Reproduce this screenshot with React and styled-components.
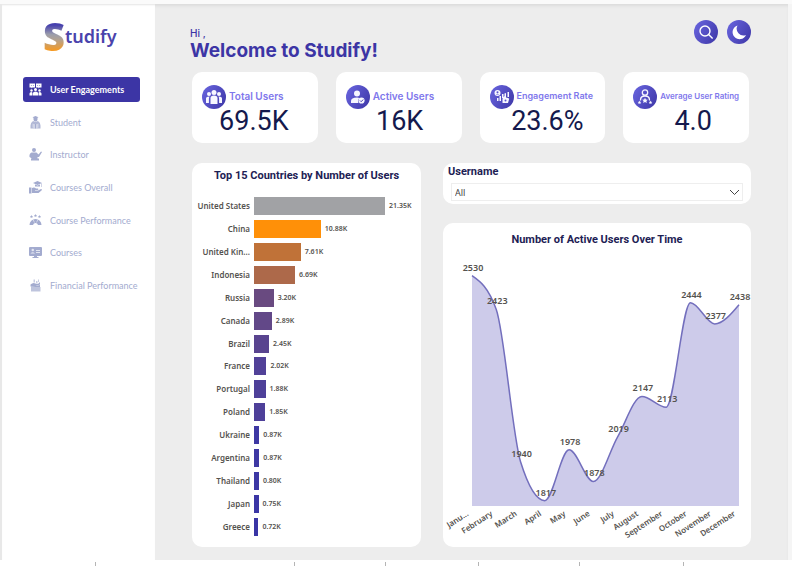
import React from "react";
import styled, { createGlobalStyle } from "styled-components";

const brand = "#3c35a5";
const navy = "#1d2154";
const uiFont = `Inter, "Open Sans", sans-serif`;
const navFont = `Lato, "Open Sans", sans-serif`;
const dinFont = `Roboto, "Liberation Sans", sans-serif`;
const chartFont = `"Noto Sans", "Open Sans", sans-serif`;

const GlobalStyle = createGlobalStyle`
  * { box-sizing: border-box; }
  body { margin: 0; background: #fff; font-family: ${uiFont}; }
`;

const Page = styled.div`
  min-height: 100vh;
  display: flex;
  flex-direction: column;
  border-top: 4px solid #fafafa;
`;

const Canvas = styled.div`
  flex: 1;
  display: grid;
  grid-template-columns: 153px minmax(0, 1fr);
  border-left: 2px solid #e8e8e8;
  border-right: 4px solid #f5f5f5;
  background: #ededed;
  box-shadow: inset 0 3px 3px -1px #dcdcdc;
`;

const Sidebar = styled.aside`
  background: #fff;
  padding: 11px 15px 0 21px;
  box-shadow: inset 0 2px 2px -1px #e4e4e4;
`;

const Logo = styled.a`
  display: flex;
  align-items: center;
  height: 42px;
  margin: 0 0 20px 20px;
  color: #4a43ac;
  font: 600 18px/42px "Noto Sans", sans-serif;
  text-decoration: none;
`;

const LogoInitial = styled.span`
  font: 800 38px/42px "Open Sans", sans-serif;
  color: transparent;
  background: linear-gradient(#4640ae 24%, #9b9dab 46%, #b1a294 58%, #f59a24 84%);
  background-clip: text;
  -webkit-background-clip: text;
`;

const NavList = styled.nav`
  display: flex;
  flex-direction: column;
  justify-content: space-between;
  height: 221px;
`;

const NavItem = styled.a`
  display: flex;
  align-items: center;
  gap: 8px;
  height: 25px;
  padding-left: 6px;
  border-radius: 3px;
  white-space: nowrap;
  text-decoration: none;
  font-family: ${navFont};
  font-size: 9px;
  font-weight: ${(p) => (p.$active ? 700 : 400)};
  color: ${(p) => (p.$active ? "#fff" : "#a3abcf")};
  background: ${(p) => (p.$active ? brand : "transparent")};
  svg { width: 13px; height: 13px; flex: none; }
`;

const Main = styled.main`
  display: flex;
  flex-direction: column;
  padding: 16px 37px 13px 35px;
`;

const Header = styled.header`
  display: flex;
  justify-content: space-between;
  height: 52px;
`;

const Greeting = styled.p`
  margin: 6px 0 0;
  color: ${brand};
  font-size: 10px;
  line-height: 14px;
  font-weight: 500;
`;

const Title = styled.h1`
  margin: 0;
  color: ${brand};
  font-size: 19px;
  line-height: 22px;
  font-weight: 700;
`;

const Actions = styled.div`
  display: flex;
  gap: 9px;
`;

const RoundButton = styled.button`
  width: 24px;
  height: 24px;
  padding: 0;
  border: 0;
  border-radius: 50%;
  background: linear-gradient(120deg, #6a66e0, #3d36a6);
  svg { display: block; width: 24px; height: 24px; }
`;

const Stats = styled.section`
  display: grid;
  grid-template-columns: repeat(4, minmax(0, 1fr));
  gap: 18px;
  padding: 0 2px;
`;

const StatCard = styled.article`
  height: 71px;
  padding: 13px 0 0 10px;
  border-radius: 10px;
  background: #fff;
`;

const StatHead = styled.div`
  display: flex;
  align-items: center;
  gap: 3px;
  height: 24px;
`;

const StatIcon = styled.span`
  flex: none;
  width: 24px;
  height: 24px;
  border-radius: 50%;
  background: linear-gradient(120deg, #6a66e0, #3d36a6);
  svg { display: block; width: 24px; height: 24px; }
`;

const StatLabel = styled.h2`
  margin: 0;
  padding-bottom: 3px;
  white-space: nowrap;
  color: #7f78ec;
  font-size: ${(p) => p.$size}px;
  line-height: 14px;
  font-weight: 600;
`;

const StatValue = styled.p`
  margin: 0;
  padding: 0 12px 0 ${(p) => p.$inset}px;
  text-align: center;
  color: #14194d;
  font: 400 27px/24px ${dinFont};
`;

const Panels = styled.section`
  flex: 1;
  display: grid;
  grid-template-columns: minmax(0, 229fr) minmax(0, 308fr);
  gap: 22px;
  margin-top: 20px;
  padding-left: 2px;
`;

const Panel = styled.section`
  flex: 1;
  display: flex;
  flex-direction: column;
  border-radius: 10px;
  background: #fff;
  padding-top: ${(p) => p.$top}px;
`;

const PanelTitle = styled.h2`
  margin: 0;
  text-align: center;
  color: ${navy};
  font: 700 11px/14px ${dinFont};
`;

const BarRows = styled.ul`
  flex: 1;
  display: grid;
  grid-auto-rows: 1fr;
  margin: 12px 0 9px;
  padding: 0;
  list-style: none;
`;

const BarRow = styled.li`
  display: grid;
  grid-template-columns: 58px minmax(0, 1fr);
  align-items: center;
  column-gap: 4px;
  color: #55534f;
  font-family: ${chartFont};
  font-weight: 600;
`;

const BarLabel = styled.span`
  text-align: right;
  white-space: nowrap;
  font-size: 8px;
  line-height: 12px;
`;

const BarTrack = styled.span`
  display: flex;
  align-items: center;
  gap: 4px;
  padding-right: 36px;
  font-size: 7px;
  line-height: 12px;
`;

const Bar = styled.span`
  flex: none;
  height: 18px;
  background: ${(p) => p.$color};
`;

const RightColumn = styled.div`
  display: flex;
  flex-direction: column;
  gap: 19px;
`;

const Slicer = styled.section`
  height: 41px;
  padding: 2px 8px 0 5px;
  border-radius: 10px;
  background: #fff;
`;

const SlicerLabel = styled.label`
  display: block;
  color: ${navy};
  font: 700 11px/14px ${dinFont};
`;

const SelectWrap = styled.div`
  position: relative;
  margin: 4px 0 0 3px;
  svg { position: absolute; right: 3px; top: 5px; width: 11px; height: 9px; pointer-events: none; }
`;

const Select = styled.select`
  display: block;
  width: 100%;
  height: 18px;
  padding: 2px 3px 0;
  appearance: none;
  border: 1px solid #eee;
  border-radius: 0;
  background: #fff;
  color: #444;
  font: 400 9px/14px ${chartFont};
`;

const AreaSvg = styled.svg`
  display: block;
  width: 100%;
  height: auto;
  overflow: visible;
  font-family: ${chartFont};
  fill: #55534f;
`;

const PointLabel = styled.text`
  font-size: 9px;
  font-weight: 600;
  text-anchor: middle;
`;

const MonthLabel = styled.text`
  font-size: 8px;
  font-weight: 600;
  text-anchor: end;
`;

const TabStrip = styled.footer`
  display: grid;
  grid-template-columns: 96fr 199fr 91fr 93fr 101fr 104fr 108fr;
  height: 6px;
  padding-top: 2px;
`;

const TabEdge = styled.span`
  border-right: 1px solid #b5b5b5;
  &:last-child { border: 0; }
`;

const PeopleChat = () => (
  <svg viewBox="0 0 26 26" fill="currentColor">
    <path d="M1 1h11v8H7l-2 2V9H1zM14 1h11v8h-4l-2 2V9h-5z" />
    <g fill="#3c35a5"><circle cx="4.500" cy="5" r=".9" /><circle cx="8.500" cy="5" r=".9" /><circle cx="17.500" cy="5" r=".9" /><circle cx="21.500" cy="5" r=".9" /></g>
    <circle cx="13" cy="13" r="3" /><circle cx="5" cy="15" r="2.400" /><circle cx="21" cy="15" r="2.400" />
    <path d="M8 25v-5q0-3 5-3t5 3v5zM1 25v-4q0-3 4-3 2 0 2 3v4zM25 25v-4q0-3-4-3-2 0-2 3v4z" />
  </svg>
);
const Student = () => (
  <svg viewBox="0 0 26 26" fill="currentColor">
    <path d="M13 0l6 2.500-2 1v3.500a4 4 0 0 1-8 0V3.500l-2-1z" />
    <path d="M8 10q5 3 10 0 5 3 5 9v6H3v-6q0-6 5-9z" opacity=".85" />
    <path d="M7 15l6 2 6-2v8l-6 2-6-2z" fill="#fff" opacity=".4" /><path d="M12 16h2v9h-2z" />
  </svg>
);
const Instructor = () => (
  <svg viewBox="0 0 26 26" fill="currentColor">
    <circle cx="10" cy="4" r="4" />
    <path d="M5 9h10l4 4 5-6 2 1-6 10h-3v3h3v4H4v-4h2L1 18q-1-7 4-9z" />
  </svg>
);
const HandCap = () => (
  <svg viewBox="0 0 26 26" fill="currentColor">
    <path d="M17 0l9 4-9 4-9-4zM12 7l5 2 5-2v4H12zM24 5h1v7h-1z" />
    <path d="M0 13h5v12H0zM6 14q5-2 8 1h4q2 2-1 3h-5v1h6l6-3q3 0 1 3l-6 5H6z" />
  </svg>
);
const GaugeStars = () => (
  <svg viewBox="0 0 26 26" fill="currentColor">
    <path d="M5 2l1 2 2 .4-1.500 1.400.4 2.200L5 7 3 8l.4-2.200L2 4.400 4 4zM13 0l1 2 2 .4-1.500 1.400.4 2.200L13 5l-2 1 .4-2.200L10 2.400l2-.4zM21 2l1 2 2 .4-1.500 1.400.4 2.200L21 7l-2 1 .4-2.200L18 4.400l2-.4z" />
    <path d="M1 22a12 12 0 0 1 24 0h-7q-1-4-5-4t-5 4z" /><path d="M8 11l3 6M18 11l-3 6" stroke="#fff" />
  </svg>
);
const Monitor = () => (
  <svg viewBox="0 0 26 26" fill="currentColor">
    <path d="M2 2h22q2 0 2 2v14q0 2-2 2h-8v2h3v2H7v-2h3v-2H2q-2 0-2-2V4q0-2 2-2z" />
    <g fill="#fff" opacity=".7"><circle cx="7.500" cy="8" r="2.500" /><path d="M3 15q4-5 9 0zM14 8h8v2h-8zM14 12h8v2h-8z" /></g>
  </svg>
);
const Finance = () => (
  <svg viewBox="0 0 26 26" fill="currentColor">
    <path d="M3 11q5-5 10-2t9-3v5l-9 3-10 1z" />
    <path d="M9 1h3v6H9zM14 4h3v5h-3zM18 1h2v5h-2z" opacity=".6" />
    <path d="M4 16h19v9H4z" opacity=".7" /><path d="M4 15l9-1 9-2v4H4z" />
  </svg>
);

const UsersGlyph = () => (
  <svg viewBox="0 0 24 24" fill="#f7f7ff">
    <circle cx="12" cy="7.500" r="2.500" /><circle cx="7" cy="9" r="2" /><circle cx="17" cy="9" r="2" />
    <path d="M8.500 19v-6q0-2.500 3.500-2.500t3.500 2.500v6zM4 18v-4.500Q4 11.500 7.500 11.500q-.6 1-.6 2.500V18zM20 18v-4.500q0-2-3.500-2 .6 1 .6 2.500V18z" />
  </svg>
);
const UserCheckGlyph = () => (
  <svg viewBox="0 0 24 24" fill="#f7f7ff">
    <circle cx="11" cy="8.500" r="3" /><path d="M5 18v-2q0-3.500 6-3.500 1.500 0 2.500.5-2.500 2-1 5z" />
    <circle cx="15.500" cy="15.500" r="3.100" /><path d="M14 15.500l1.200 1.200 2-2.200" fill="none" stroke="#4740b0" />
  </svg>
);
const RateGlyph = () => (
  <svg viewBox="0 0 24 24" fill="#f7f7ff">
    <circle cx="7.500" cy="8" r="3" /><circle cx="7.500" cy="7.300" r="1" fill="#5a55cc" /><path d="M5.700 9.600q1.800-1.800 3.600 0z" fill="#5a55cc" />
    <path d="M7 13h1.500v3H7zM9.500 11H11v5H9.500zM12 9h1.500v4H12zM14.500 11V8.500q1-1 1.500 0v4L18 13q1.500 0 1 1.500L18 18h-5.500v-4.500zM17.500 7H19v5h-1.500z" />
    <circle cx="15.500" cy="15.500" r="1" fill="#5a55cc" />
  </svg>
);
const RatingGlyph = () => (
  <svg viewBox="0 0 24 24" fill="#f7f7ff">
    <circle cx="12" cy="7.500" r="2.700" fill="none" stroke="#f7f7ff" strokeWidth="1.300" />
    <path d="M7.500 15.500V15q0-4 4.500-4t4.500 4v.5" fill="none" stroke="#f7f7ff" strokeWidth="1.300" />
    <path d="M12 12.800l.9 1.700 1.900.3-1.400 1.300.4 1.900-1.800-.9-1.800.9.4-1.900-1.400-1.300 1.900-.3z" />
    <path d="M6.500 15.700l.6 1.100 1.200.2-.9.800.2 1.200-1.100-.6-1.100.6.2-1.200-.9-.8 1.200-.2zM17.500 15.700l.6 1.100 1.200.2-.9.800.2 1.200-1.100-.6-1.100.6.2-1.200-.9-.8 1.200-.2z" />
  </svg>
);

const navItems = [
  ["User Engagements", PeopleChat],
  ["Student", Student],
  ["Instructor", Instructor],
  ["Courses Overall", HandCap],
  ["Course Performance", GaugeStars],
  ["Courses", Monitor],
  ["Financial Performance", Finance],
];

const stats = [
  { label: "Total Users", value: "69.5K", size: 10, inset: 0, Icon: UsersGlyph },
  { label: "Active Users", value: "16K", size: 10, inset: 4, Icon: UserCheckGlyph },
  { label: "Engagement Rate", value: "23.6%", size: 9, inset: 12, Icon: RateGlyph },
  { label: "Average User Rating", value: "4.0", size: 8, inset: 16, Icon: RatingGlyph },
];

const countries = [
  ["United States", "21.35", "#a1a2a5"],
  ["China", "10.88", "#ff9008"],
  ["United Kin...", "7.61", "#c07238"],
  ["Indonesia", "6.69", "#ad694a"],
  ["Russia", "3.20", "#694a80"],
  ["Canada", "2.89", "#624888"],
  ["Brazil", "2.45", "#59448f"],
  ["France", "2.02", "#514198"],
  ["Portugal", "1.88", "#4e4099"],
  ["Poland", "1.85", "#4e4099"],
  ["Ukraine", "0.87", "#3e38a3"],
  ["Argentina", "0.87", "#3e38a3"],
  ["Thailand", "0.80", "#3c37a4"],
  ["Japan", "0.75", "#3b36a5"],
  ["Greece", "0.72", "#3a35a5"],
];

const months = [
  ["Janu...", 2530], ["February", 2423], ["March", 1940], ["April", 1817],
  ["May", 1978], ["June", 1878], ["July", 2019], ["August", 2147],
  ["September", 2113], ["October", 2444], ["November", 2377], ["December", 2438],
];

const baseY = 259;
const stepX = 267 / 11;
const points = months.map(([, v], i) => [29 + i * stepX, baseY - (v - 1800) * 0.3156]);

/* Monotone cubic interpolation through the monthly points. */
function monotonePath(pts) {
  const slopes = pts.slice(1).map((p, i) => (p[1] - pts[i][1]) / (p[0] - pts[i][0]));
  const tangents = pts.map((_, i) => {
    if (i === 0 || i === pts.length - 1) return null;
    const a = slopes[i - 1];
    const b = slopes[i];
    if (a * b <= 0) return 0;
    return Math.sign(a) * 2 * Math.min(Math.abs(a), Math.abs(b), Math.abs(a + b) / 4);
  });
  tangents[0] = (3 * slopes[0] - tangents[1]) / 2;
  const last = pts.length - 1;
  tangents[last] = (3 * slopes[last - 1] - tangents[last - 1]) / 2;
  return pts.slice(1).reduce((d, p, i) => {
    const [x0, y0] = pts[i];
    const h = (p[0] - x0) / 3;
    return `${d}C${x0 + h},${y0 + h * tangents[i]},${p[0] - h},${p[1] - h * tangents[i + 1]},${p[0]},${p[1]}`;
  }, `M${pts[0][0]},${pts[0][1]}`);
}

const line = monotonePath(points);

function AreaChart() {
  return (
    <AreaSvg viewBox="0 0 308 300" role="img" aria-label="Number of active users by month">
      <path d={`${line}V${baseY}H29Z`} fill="#cdcbea" />
      <path d={line} fill="none" stroke="#736fbd" strokeWidth="1.500" />
      {months.map(([name, value], i) => (
        <g key={name}>
          <PointLabel x={points[i][0] + 1} y={points[i][1] - 5}>{value}</PointLabel>
          <MonthLabel transform={`translate(${points[i][0] - 3} ${baseY + 9}) rotate(-33)`}>{name}</MonthLabel>
        </g>
      ))}
    </AreaSvg>
  );
}

export default function App() {
  return (
    <>
      <GlobalStyle />
      <Page>
        <Canvas>
          <Sidebar>
            <Logo href="#home"><LogoInitial>S</LogoInitial>tudify</Logo>
            <NavList>
              {navItems.map(([label, Icon], i) => (
                <NavItem key={label} href="#" $active={i === 0}><Icon />{label}</NavItem>
              ))}
            </NavList>
          </Sidebar>
          <Main>
            <Header>
              <div>
                <Greeting>Hi ,</Greeting>
                <Title>Welcome to Studify!</Title>
              </div>
              <Actions>
                <RoundButton aria-label="Search">
                  <svg viewBox="0 0 24 24" fill="none" stroke="#fff" strokeWidth="1.400"><circle cx="11" cy="11" r="5" /><path d="M14.600 14.600l4 4" /></svg>
                </RoundButton>
                <RoundButton aria-label="Dark mode">
                  <svg viewBox="0 0 24 24" fill="#fff"><path d="M10.500 5.500a7 7 0 1 0 8.500 9.500A6.800 6.800 0 0 1 10.500 5.500z" /></svg>
                </RoundButton>
              </Actions>
            </Header>
            <Stats>
              {stats.map(({ label, value, size, inset, Icon }) => (
                <StatCard key={label}>
                  <StatHead>
                    <StatIcon><Icon /></StatIcon>
                    <StatLabel $size={size}>{label}</StatLabel>
                  </StatHead>
                  <StatValue $inset={inset}>{value}</StatValue>
                </StatCard>
              ))}
            </Stats>
            <Panels>
              <Panel $top={6}>
                <PanelTitle>Top 15 Countries by Number of Users</PanelTitle>
                <BarRows>
                  {countries.map(([name, value, color]) => (
                    <BarRow key={name}>
                      <BarLabel>{name}</BarLabel>
                      <BarTrack>
                        <Bar $color={color} style={{ width: `${(value / 21.35) * 100}%` }} />
                        {value}K
                      </BarTrack>
                    </BarRow>
                  ))}
                </BarRows>
              </Panel>
              <RightColumn>
                <Slicer>
                  <SlicerLabel htmlFor="username">Username</SlicerLabel>
                  <SelectWrap>
                    <Select id="username"><option>All</option></Select>
                    <svg viewBox="0 0 11 9" fill="none" stroke="#444"><path d="M1 2l4.500 4.500L10 2" /></svg>
                  </SelectWrap>
                </Slicer>
                <Panel $top={10}>
                  <PanelTitle>Number of Active Users Over Time</PanelTitle>
                  <AreaChart />
                </Panel>
              </RightColumn>
            </Panels>
          </Main>
        </Canvas>
        <TabStrip>
          {Array.from({ length: 7 }, (_, i) => <TabEdge key={i} />)}
        </TabStrip>
      </Page>
    </>
  );
}
